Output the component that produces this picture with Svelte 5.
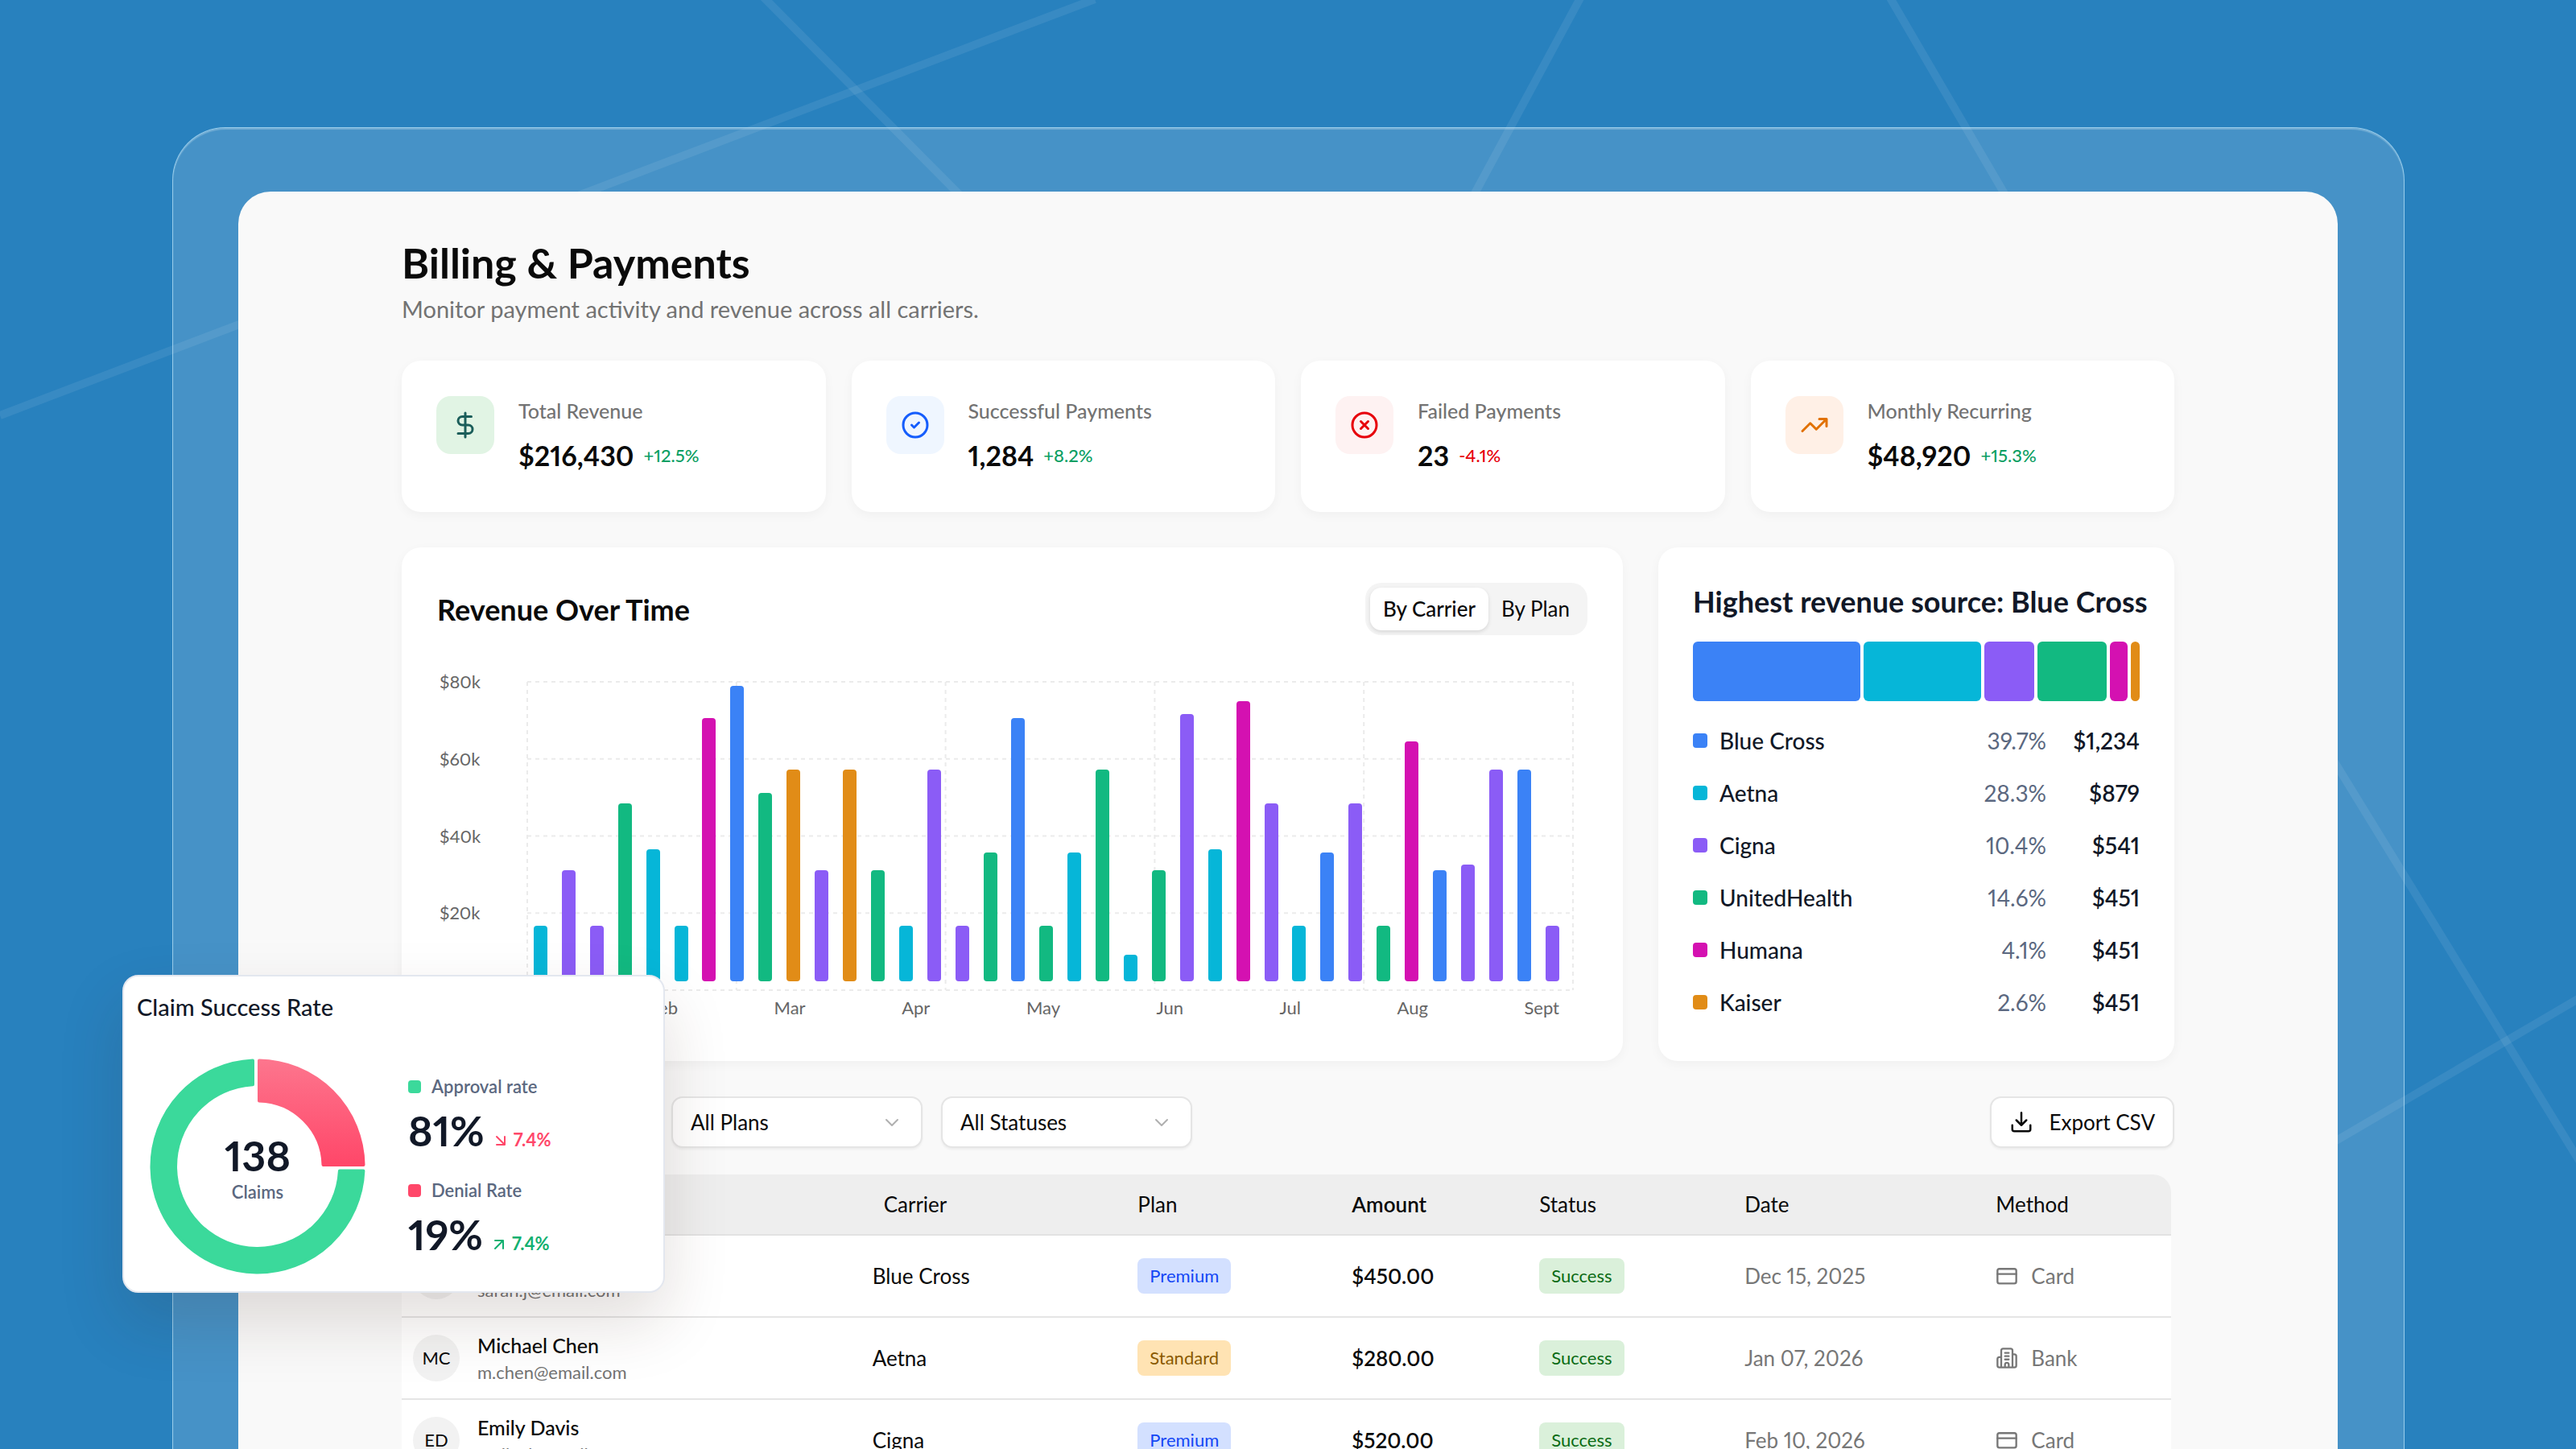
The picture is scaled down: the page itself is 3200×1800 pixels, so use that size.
<script>
  const C = {
    blue: '#3b82f6', cyan: '#06b6d8', violet: '#8b5cf6',
    green: '#12b981', pink: '#d411b1', amber: '#e18c17',
  };

  const stats = [
    { label: 'Total Revenue',       value: '$216,430', change: '+12.5%', icon: 'dollar', fg: '#1b5e5a', bg: '#e1f4e4' },
    { label: 'Successful Payments', value: '1,284',    change: '+8.2%',  icon: 'check',  fg: '#155dfc', bg: '#eff6ff' },
    { label: 'Failed Payments',     value: '23',       change: '-4.1%',  icon: 'cross',  fg: '#e7000b', bg: '#fef2f2' },
    { label: 'Monthly Recurring',   value: '$48,920',  change: '+15.3%', icon: 'trend',  fg: '#e17100', bg: '#fff0e6' },
  ];

  // [carrier colour, bar height in plot units]
  const PLOT_H = 372;
  const bars = [
    ['cyan', 69], ['violet', 138], ['violet', 69], ['green', 221], ['cyan', 164], ['cyan', 69],
    ['pink', 327], ['blue', 367], ['green', 234], ['amber', 263], ['violet', 138], ['amber', 263],
    ['green', 138], ['cyan', 69], ['violet', 263], ['violet', 69], ['green', 160], ['blue', 327],
    ['green', 69], ['cyan', 160], ['green', 263], ['cyan', 33], ['green', 138], ['violet', 332],
    ['cyan', 164], ['pink', 348], ['violet', 221], ['cyan', 69], ['blue', 160], ['violet', 221],
    ['green', 69], ['pink', 298], ['blue', 138], ['violet', 145], ['violet', 263], ['blue', 263],
    ['violet', 69],
  ];
  const ticks = ['$80k', '$60k', '$40k', '$20k'];
  const months = ['Jan', 'Feb', 'Mar', 'Apr', 'May', 'Jun', 'Jul', 'Aug', 'Sept'];
  const hLines = [0, 25, 50, 75, 100];
  const vLines = [0, 20, 40, 60, 80, 100];

  const sources = [
    { name: 'Blue Cross',   pct: '39.7%', amount: '$1,234', color: C.blue,   span: 209 },
    { name: 'Aetna',        pct: '28.3%', amount: '$879',   color: C.cyan,   span: 147 },
    { name: 'Cigna',        pct: '10.4%', amount: '$541',   color: C.violet, span: 62 },
    { name: 'UnitedHealth', pct: '14.6%', amount: '$451',   color: C.green,  span: 87 },
    { name: 'Humana',       pct: '4.1%',  amount: '$451',   color: C.pink,   span: 22 },
    { name: 'Kaiser',       pct: '2.6%',  amount: '$451',   color: C.amber,  span: 11 },
  ];

  const payments = [
    { initials: 'SJ', name: 'Sarah Johnson', email: 'sarah.j@email.com', carrier: 'Blue Cross', plan: 'Premium',  amount: '$450.00', status: 'Success', date: 'Dec 15, 2025', method: 'Card' },
    { initials: 'MC', name: 'Michael Chen',  email: 'm.chen@email.com',  carrier: 'Aetna',      plan: 'Standard', amount: '$280.00', status: 'Success', date: 'Jan 07, 2026', method: 'Bank' },
    { initials: 'ED', name: 'Emily Davis',   email: 'emily.d@email.com', carrier: 'Cigna',      plan: 'Premium',  amount: '$520.00', status: 'Success', date: 'Feb 10, 2026', method: 'Card' },
  ];

  const filters = [
    { id: 'carrier', label: 'Carrier', options: ['All Carriers', 'Blue Cross', 'Aetna', 'Cigna'] },
    { id: 'plan',    label: 'Plan',    options: ['All Plans', 'Premium', 'Standard'] },
    { id: 'status',  label: 'Status',  options: ['All Statuses', 'Success', 'Failed'] },
  ];

  const rates = [
    { label: 'Approval rate', value: '81%', delta: '7.4%', up: false, color: '#3bd99b' },
    { label: 'Denial Rate',   value: '19%', delta: '7.4%', up: true,  color: '#ff4769' },
  ];

  let view = $state('carrier');
</script>

{#snippet icon(name)}
  <svg class="icon {name}" viewBox="0 0 24 24" aria-hidden="true">
    {#if name === 'dollar'}
      <path d="M12 2v20M17 5H9.5a3.5 3.5 0 0 0 0 7h5a3.5 3.5 0 0 1 0 7H6" />
    {:else if name === 'check'}
      <circle cx="12" cy="12" r="10" /><path d="m9 12 2 2 4-4" />
    {:else if name === 'cross'}
      <circle cx="12" cy="12" r="10" /><path d="m15 9-6 6M9 9l6 6" />
    {:else if name === 'trend'}
      <path d="m22 7-8.500 8.500-5-5L2 17M16 7h6v6" />
    {:else if name === 'download'}
      <path d="M12 2.500V15M7 10l5 5 5-5M21 15v4a2 2 0 0 1-2 2H5a2 2 0 0 1-2-2v-4" />
    {:else if name === 'Card'}
      <rect x="2" y="4.500" width="20" height="15.500" rx="2" /><path d="M2 10h20" />
    {:else if name === 'Bank'}
      <path d="M6 22V4a2 2 0 0 1 2-2h8a2 2 0 0 1 2 2v18ZM6 11H4a2 2 0 0 0-2 2v7a2 2 0 0 0 2 2h2M18 8h2a2 2 0 0 1 2 2v10a2 2 0 0 1-2 2h-2M10 6.500h4M10 10h4M10 13.500h4M10 22v-3a2 2 0 0 1 4 0v3" />
    {:else if name === 'chevron'}
      <path d="m5 9 7 7 7-7" />
    {:else if name === 'up'}
      <path d="M7 7h10v10M7 17 17 7" />
    {:else if name === 'down'}
      <path d="m7 7 10 10M17 7v10H7" />
    {/if}
  </svg>
{/snippet}

<div class="page">
  <svg class="beams" viewBox="0 0 3200 1800" preserveAspectRatio="none" aria-hidden="true">
    <path d="M1360-1 0 516" />
    <path d="M948-4 1192 242M1965-6 1830 244M2346-6 2492 244M2890 930 3204 1442" />
    <path d="M3204 1240 2890 1424" />
  </svg>

  <div class="frame">
    <main class="panel">
      <header class="head">
        <h1>Billing &amp; Payments</h1>
        <p>Monitor payment activity and revenue across all carriers.</p>
      </header>

      <section class="stats">
        {#each stats as s}
          <article class="card stat">
            <div class="tile" style="color: {s.fg}; background: {s.bg}">{@render icon(s.icon)}</div>
            <div>
              <div class="stat-label">{s.label}</div>
              <div class="stat-row">
                <span class="stat-value">{s.value}</span>
                <span class="stat-change" class:neg={s.change.startsWith('-')}>{s.change}</span>
              </div>
            </div>
          </article>
        {/each}
      </section>

      <section class="charts">
        <article class="card revenue">
          <div class="revenue-head">
            <h2>Revenue Over Time</h2>
            <div class="toggle">
              <button class:active={view === 'carrier'} onclick={() => (view = 'carrier')}>By Carrier</button>
              <button class:active={view === 'plan'} onclick={() => (view = 'plan')}>By Plan</button>
            </div>
          </div>
          <div class="chart">
            <div class="y-axis">
              {#each ticks as t}<span>{t}</span>{/each}
            </div>
            <div class="plot">
              <svg class="grid-lines" aria-hidden="true">
                {#each hLines as p}<line x1="0" x2="100%" y1="{p}%" y2="{p}%" />{/each}
                {#each vLines as p}<line x1="{p}%" x2="{p}%" y1="0" y2="100%" />{/each}
              </svg>
              {#each bars as [color, h]}
                <div class="bar" style="height: {(h / PLOT_H) * 100}%; background: {C[color]}"></div>
              {/each}
            </div>
            <div class="x-axis">
              {#each months as m}<span>{m}</span>{/each}
            </div>
          </div>
        </article>

        <article class="card sources">
          <h2>Highest revenue source: Blue Cross</h2>
          <div class="stack">
            {#each sources as s}
              <div style="flex-grow: {s.span}; background: {s.color}"></div>
            {/each}
          </div>
          <ul>
            {#each sources as s}
              <li>
                <span class="swatch" style="background: {s.color}"></span>
                <span class="src-name">{s.name}</span>
                <span class="src-pct">{s.pct}</span>
                <span class="src-amount">{s.amount}</span>
              </li>
            {/each}
          </ul>
        </article>
      </section>

      <section class="toolbar">
        {#each filters as f}
          <div class="select">
            <select id="filter-{f.id}" aria-label={f.label}>
              {#each f.options as o}<option>{o}</option>{/each}
            </select>
            {@render icon('chevron')}
          </div>
        {/each}
        <button class="export">{@render icon('download')}Export CSV</button>
      </section>

      <table>
        <colgroup>
          <col class="w-customer" /><col class="w-carrier" /><col class="w-plan" /><col class="w-amount" />
          <col class="w-status" /><col class="w-date" /><col />
        </colgroup>
        <thead>
          <tr>
            <th aria-label="Customer"></th>
            <th class="carrier">Carrier</th>
            <th>Plan</th>
            <th class="amount">Amount</th>
            <th>Status</th>
            <th>Date</th>
            <th>Method</th>
          </tr>
        </thead>
        <tbody>
          {#each payments as p}
            <tr>
              <td>
                <div class="person">
                  <span class="avatar">{p.initials}</span>
                  <div>
                    <div class="name">{p.name}</div>
                    <div class="email">{p.email}</div>
                  </div>
                </div>
              </td>
              <td>{p.carrier}</td>
              <td><span class="badge {p.plan.toLowerCase()}">{p.plan}</span></td>
              <td class="amount">{p.amount}</td>
              <td><span class="badge success">{p.status}</span></td>
              <td class="muted">{p.date}</td>
              <td class="muted"><div class="method">{@render icon(p.method)}{p.method}</div></td>
            </tr>
          {/each}
        </tbody>
      </table>
    </main>
  </div>

  <aside class="claims">
    <h3>Claim Success Rate</h3>
    <div class="claims-body">
      <div class="donut">
        <svg viewBox="0 0 268 268" aria-hidden="true">
          <defs>
            <linearGradient id="denial" x1="0" y1="0" x2="0" y2="1">
              <stop offset="0" stop-color="#fd758d" />
              <stop offset="1" stop-color="#ff4769" />
            </linearGradient>
          </defs>
          <path class="approved" d="M265.400 139.500A131.500 131.500 0 1 1 128 2.600V32.200A102 102 0 1 0 235.900 139.500Z" />
          <path class="denied" d="M136 2.500A131.500 131.500 0 0 1 265.500 132H215.500A81.500 81.500 0 0 0 136 52.500Z" />
        </svg>
        <div class="donut-text">
          <strong>138</strong>
          <span>Claims</span>
        </div>
      </div>
      <div class="rates">
        {#each rates as r}
          <div>
            <div class="rate-label"><span class="dot" style="background: {r.color}"></span>{r.label}</div>
            <div class="rate-row">
              <strong>{r.value}</strong>
              <span class="delta" class:up={r.up}>{@render icon(r.up ? 'up' : 'down')}{r.delta}</span>
            </div>
          </div>
        {/each}
      </div>
    </div>
  </aside>
</div>

<style>
  :global(body) {
    margin: 0;
  }

  .page {
    position: relative;
    display: flex;
    height: 100vh;
    box-sizing: border-box;
    padding: 158px 213px 0 214px;
    overflow: hidden;
    background: #2881be;
    color: #0a0a0a;
    font-family: Lato, 'Open Sans', sans-serif;
    font-size: 26px;
    font-variant-numeric: proportional-nums;
    line-height: 36px;
  }

  h1, h2, h3, p, ul {
    margin: 0;
    padding: 0;
  }

  button, select {
    font: inherit;
    color: inherit;
    cursor: pointer;
  }

  .icon {
    width: 36px;
    height: 36px;
    flex-shrink: 0;
    fill: none;
    stroke: currentColor;
    stroke-width: 2;
    stroke-linecap: round;
    stroke-linejoin: round;
  }

  .beams {
    position: absolute;
    inset: 0;
    width: 100%;
    height: 100%;
    fill: none;
    stroke: rgba(255, 255, 255, 0.08);
    stroke-width: 10;
  }

  /* ── Frame and panel ── */
  .frame {
    position: relative;
    flex: 1;
    display: flex;
    align-self: flex-start;
    min-height: 100%;
    box-sizing: border-box;
    padding: 79px 82px 0 81px;
    border: 1px solid rgba(190, 230, 250, 0.75);
    border-bottom: none;
    border-radius: 66px 66px 0 0;
    background: rgba(255, 255, 255, 0.14);
    background-clip: padding-box;
    box-shadow: inset 0 2px 1px rgba(255, 255, 255, 0.25);
  }

  .panel {
    flex: 1;
    min-width: 0;
    padding: 56px 203px 0;
    border-radius: 40px 40px 0 0;
    background: #f9f9f9;
  }

  h1 {
    font-size: 52px;
    line-height: 64px;
    font-weight: 700;
  }

  .head p {
    margin-top: 8px;
    font-size: 29px;
    color: #737373;
  }

  .card {
    min-width: 0;
    border-radius: 24px;
    background: #fff;
    box-shadow: 0 4px 14px rgba(0, 0, 0, 0.04);
  }

  /* ── Stats ── */
  .stats {
    display: grid;
    grid-template-columns: repeat(4, 1fr);
    gap: 32px;
    margin-top: 46px;
  }

  .stat {
    display: flex;
    gap: 30px;
    padding: 44px 43px 48px;
  }

  .tile {
    display: flex;
    align-items: center;
    justify-content: center;
    width: 72px;
    height: 72px;
    border-radius: 18px;
  }

  .stat-label {
    font-size: 25px;
    font-weight: 500;
    color: #737373;
  }

  .stat-row {
    display: flex;
    align-items: center;
    gap: 12px;
    margin-top: 16px;
    line-height: 44px;
  }

  .stat-value {
    font-size: 34px;
    font-weight: 700;
  }

  .stat-change {
    font-size: 22px;
    font-weight: 500;
    color: #0a9e62;
  }

  .stat-change.neg {
    color: #e7000b;
  }

  /* ── Charts ── */
  .charts {
    display: grid;
    grid-template-columns: 1517fr 641fr;
    gap: 44px;
    margin-top: 44px;
  }

  h2 {
    font-size: 36px;
    line-height: 44px;
    font-weight: 700;
    white-space: nowrap;
  }

  .revenue {
    padding: 44px 44px 52px;
  }

  .revenue-head {
    display: flex;
    align-items: center;
    justify-content: space-between;
  }

  .toggle {
    display: flex;
    padding: 6px;
    border-radius: 20px;
    background: #f4f4f4;
  }

  .toggle button {
    padding: 8px 16px;
    border: none;
    border-radius: 14px;
    background: none;
    line-height: 37px;
  }

  .toggle .active {
    background: #fff;
    font-weight: 500;
    box-shadow: 0 2px 5px rgba(0, 0, 0, 0.12);
  }

  .chart {
    display: grid;
    grid-template-columns: 112px 1fr;
    grid-template-rows: 383px auto;
    margin: 58px 18px 0 0;
    font-size: 22px;
    color: #666;
  }

  .y-axis {
    display: grid;
    grid-template-rows: repeat(4, 1fr);
    padding-left: 3px;
    line-height: 0;
  }

  .plot {
    position: relative;
    display: flex;
    align-items: flex-end;
    justify-content: space-between;
    padding: 0 17px 11px 8px;
  }

  .grid-lines {
    position: absolute;
    inset: 0;
    width: 100%;
    height: 100%;
    overflow: visible;
    stroke: #ebebeb;
    stroke-width: 2;
    stroke-dasharray: 5 5;
  }

  .bar {
    position: relative;
    width: 17px;
    border-radius: 4px;
  }

  .x-axis {
    grid-column: 2;
    display: flex;
    justify-content: space-between;
    padding: 8px 17px 0 0;
    line-height: 28px;
  }

  /* ── Revenue sources ── */
  .sources {
    padding: 45px 43px;
    color: #111827;
  }

  .stack {
    display: flex;
    gap: 4px;
    height: 74px;
    margin: 28px 0 29px;
  }

  .stack div {
    border-radius: 6px;
  }

  .sources ul {
    display: grid;
    gap: 25px;
    list-style: none;
    font-size: 28px;
    line-height: 40px;
  }

  .sources li {
    display: flex;
    align-items: center;
  }

  .swatch {
    width: 18px;
    height: 18px;
    margin-right: 15px;
    border-radius: 4px;
  }

  .src-name {
    flex: 1;
    font-weight: 500;
  }

  .src-pct {
    color: #5b6880;
  }

  .src-amount {
    width: 116px;
    text-align: right;
    font-weight: 600;
  }

  /* ── Filters ── */
  .toolbar {
    display: flex;
    gap: 23px;
    margin: 44px 0 33px;
  }

  .select {
    position: relative;
    width: 312px;
  }

  select,
  .export {
    height: 64px;
    border: 2px solid #e5e5e5;
    border-radius: 14px;
    background: #fff;
    box-shadow: 0 2px 3px rgba(0, 0, 0, 0.05);
  }

  select {
    appearance: none;
    width: 100%;
    padding: 0 22px;
  }

  .chevron {
    position: absolute;
    top: 20px;
    right: 24px;
    width: 28px;
    height: 24px;
    color: #b0b0b0;
    pointer-events: none;
  }

  .export {
    display: flex;
    align-items: center;
    gap: 20px;
    margin-left: auto;
    padding: 0 22px;
  }

  .download {
    width: 30px;
    height: 30px;
  }

  /* ── Table ── */
  table {
    width: calc(100% - 4px);
    table-layout: fixed;
    border-spacing: 0;
    border-radius: 22px 22px 0 0;
    overflow: hidden;
    background: #fff;
  }

  .w-customer { width: 26.6%; }
  .w-carrier  { width: 15%; }
  .w-plan     { width: 12.1%; }
  .w-amount   { width: 10.6%; }
  .w-status   { width: 11.6%; }
  .w-date     { width: 14.2%; }

  th {
    height: 74px;
    padding: 0;
    border-bottom: 2px solid #e2e2e2;
    background: #eee;
    font-weight: 400;
    text-align: left;
  }

  th.carrier {
    padding-left: 14px;
  }

  td {
    height: 100px;
    padding: 0;
    border-bottom: 2px solid #e5e5e5;
  }

  .amount {
    font-weight: 600;
  }

  .person {
    display: flex;
    align-items: center;
    gap: 22px;
    padding-left: 14px;
  }

  .avatar {
    width: 58px;
    border-radius: 50%;
    background: #f2f2f2;
    font-size: 22px;
    line-height: 58px;
    text-align: center;
  }

  .name {
    font-size: 25px;
    font-weight: 500;
    line-height: 36px;
  }

  .email {
    font-size: 22px;
    line-height: 32px;
    color: #737373;
  }

  .badge {
    display: inline-block;
    padding: 0 15px;
    border-radius: 8px;
    font-size: 22px;
    line-height: 44px;
    vertical-align: middle;
  }

  .premium  { background: #d3e0ff; color: #1447f5; }
  .standard { background: #ffe3b3; color: #8a5a00; }
  .success  { background: #daf0da; color: #0b6b14; }

  .muted {
    color: #777;
  }

  .method {
    display: flex;
    align-items: center;
    gap: 16px;
  }

  .method .icon {
    width: 28px;
    height: 28px;
  }

  /* ── Claims popover ── */
  .claims {
    position: absolute;
    top: 1211px;
    left: 152px;
    width: 674px;
    box-sizing: border-box;
    padding: 20px 18px 21px 16px;
    border: 2px solid #e3e7ef;
    border-radius: 20px;
    background: #fff;
    color: #111827;
    box-shadow: 0 36px 80px rgba(60, 35, 20, 0.15);
  }

  h3 {
    font-size: 29px;
    line-height: 36px;
    font-weight: 500;
  }

  .claims-body {
    display: flex;
    gap: 53px;
    margin: 46px 0 0 16px;
  }

  .donut {
    position: relative;
    width: 268px;
    height: 268px;
  }

  .donut path {
    stroke-width: 4;
    stroke-linejoin: round;
  }

  .approved { fill: #3bd99b; stroke: #3bd99b; }
  .denied   { fill: url(#denial); stroke: url(#denial); }

  .donut-text {
    position: absolute;
    inset: 0;
    display: flex;
    flex-direction: column;
    align-items: center;
    justify-content: center;
  }

  .claims strong {
    font-size: 52px;
    line-height: 64px;
    font-weight: 700;
  }

  .donut-text span,
  .rate-label {
    font-size: 22px;
    line-height: 28px;
    font-weight: 600;
    color: #5b6880;
  }

  .rates {
    display: flex;
    flex-direction: column;
    gap: 29px;
    padding-top: 21px;
  }

  .rate-label {
    display: flex;
    align-items: center;
    gap: 13px;
  }

  .dot {
    width: 16px;
    height: 16px;
    border-radius: 4px;
  }

  .rate-row {
    display: flex;
    align-items: baseline;
    gap: 8px;
    margin-top: 8px;
  }

  .delta {
    font-size: 22px;
    font-weight: 700;
    color: #ff4769;
  }

  .delta.up {
    color: #12b070;
  }

  .delta .icon {
    width: 24px;
    height: 24px;
    margin-right: 4px;
    vertical-align: -5px;
  }
</style>
